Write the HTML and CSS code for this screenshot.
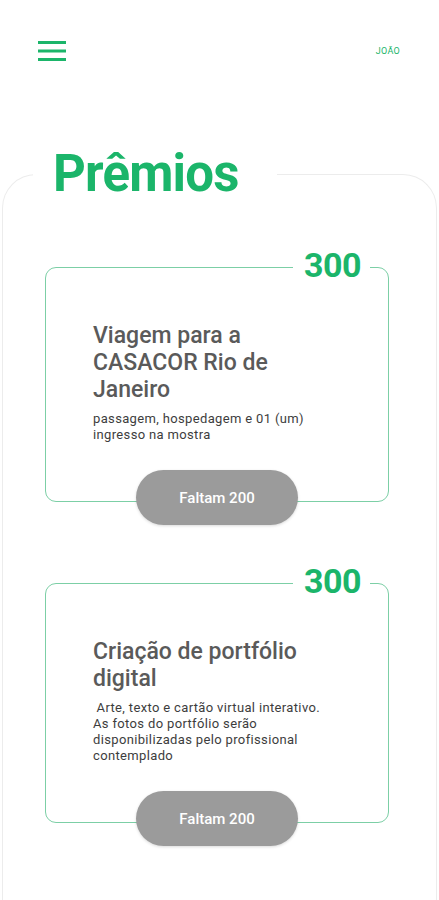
FILE: index.html
```html
<!DOCTYPE html>
<html lang="pt-BR">
<head>
  <meta charset="UTF-8" />
  <title>Prêmios</title>
  <meta name="viewport" content="width=device-width, initial-scale=1.0" />
  <link rel="stylesheet" href="styles.css">
</head>
<body>
  <div class="top-bar">
    <button class="menu-btn" aria-label="Menu">
      <svg width="28" height="22" viewBox="0 0 28 22">
        <path d="M0 2.5h28M0 11h28M0 19.5h28" stroke="#1bb56a" stroke-width="3" stroke-linecap="round"/>
      </svg>
    </button>
    <span class="user-name">JOÃO</span>
  </div>

  <div class="sheet">
    <h1 class="title">Prêmios</h1>

    <div class="prize-card">
      <span class="points">300</span>
      <h2>Viagem para a CASACOR Rio de Janeiro</h2>
      <p>passagem, hospedagem e 01 (um) ingresso na mostra</p>
      <button class="remaining">Faltam 200</button>
    </div>

    <div class="prize-card">
      <span class="points">300</span>
      <h2>Criação de portfólio digital</h2>
      <p>&nbsp;Arte, texto e cartão virtual interativo. As fotos do portfólio serão disponibilizadas pelo profissional contemplado</p>
      <button class="remaining">Faltam 200</button>
    </div>
  </div>
</body>
</html>
```

FILE: styles.css
```css
* {
  margin: 0;
  padding: 0;
  box-sizing: border-box;
  font-family: Roboto, 'Liberation Sans', sans-serif;
}

body {
  background: #fff;
  color: #555;
  width: 439px;
  overflow: hidden;
}

.top-bar {
  display: flex;
  justify-content: space-between;
  align-items: center;
  padding: 40px 39px 0 38px;
}

.menu-btn {
  border: none;
  background: none;
  display: flex;
}

.user-name {
  font-size: 9px;
  color: #1bb56a;
  letter-spacing: 0.3px;
}

.sheet {
  margin: 112px 2px 0;
  border: 1px solid #ececec;
  border-bottom: none;
  border-radius: 34px 34px 0 0;
  padding-bottom: 120px;
}

.title {
  display: inline-block;
  margin: -29px 0 0 30px;
  padding: 0 38px 0 20px;
  background: #fff;
  color: #1bb56a;
  font-size: 51px;
  line-height: 56px;
  font-weight: 700;
  letter-spacing: -0.8px;
}

.prize-card {
  position: relative;
  width: 344px;
  margin: 65px 0 0 42px;
  padding: 54px 0 0 47px;
  border: 1.5px solid #7ccfa6;
  border-radius: 11px;
  display: flex;
  flex-direction: column;
}

.prize-card + .prize-card {
  margin-top: 81px;
}

.points {
  position: absolute;
  top: -21px;
  right: 18px;
  padding: 0 9px 0 11px;
  background: #fff;
  color: #1bb56a;
  font-size: 34px;
  line-height: 36px;
  font-weight: 700;
  letter-spacing: -0.5px;
}

.prize-card h2 {
  max-width: 240px;
  font-size: 23px;
  line-height: 27px;
  font-weight: 500;
  color: #5a5a5a;
}

.prize-card p {
  max-width: 236px;
  margin-top: 8px;
  font-size: 13px;
  line-height: 16px;
  letter-spacing: 0.35px;
  color: #3d3d3d;
}

.remaining {
  align-self: center;
  width: 162px;
  height: 55px;
  margin: 27px 0 -24px -47px;
  border: none;
  border-radius: 28px;
  background: #9b9b9b;
  color: #fff;
  font-size: 15px;
  font-weight: 500;
  box-shadow: 0 1px 3px rgba(0, 0, 0, 0.15);
}
```
